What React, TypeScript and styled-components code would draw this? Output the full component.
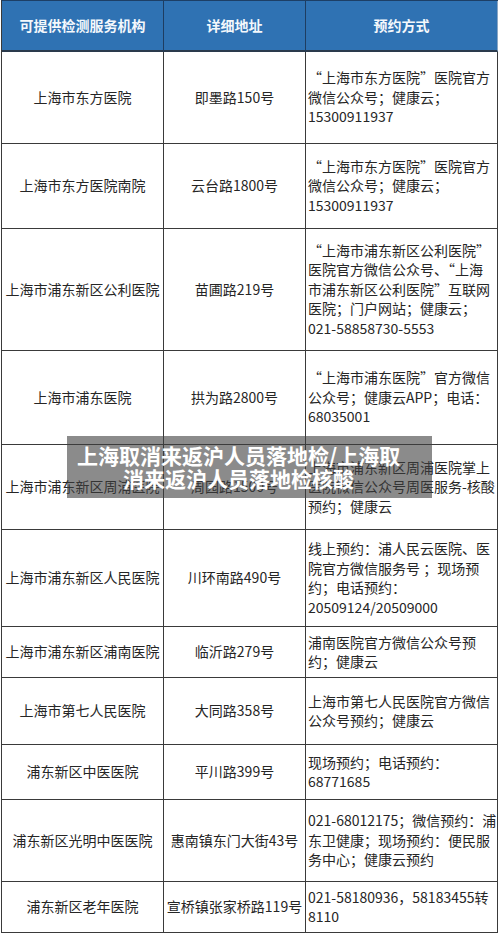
import styled, { createGlobalStyle } from "styled-components";

const GlobalStyle = createGlobalStyle`
    html, body {
        margin: 0;
        padding: 0;
        background: #ffffff;
    }
    body {
        font-family: "Noto Sans CJK SC", "Noto Sans", sans-serif;
        color: #222;
    }
`;

interface IRow {
    name: string;
    address: string;
    booking: string[];
    height: number;
}

const rows: IRow[] = [
    { name: "上海市东方医院", address: "即墨路150号", booking: ["“上海市东方医院”医院官方", "微信公众号；健康云；", "15300911937"], height: 92 },
    { name: "上海市东方医院南院", address: "云台路1800号", booking: ["“上海市东方医院”医院官方", "微信公众号；健康云；", "15300911937"], height: 85 },
    {
        name: "上海市浦东新区公利医院",
        address: "苗圃路219号",
        booking: ["“上海市浦东新区公利医院”", "医院官方微信公众号、“上海", "市浦东新区公利医院”互联网", "医院；门户网站；健康云；", "021-58858730-5553"],
        height: 122,
    },
    { name: "上海市浦东医院", address: "拱为路2800号", booking: ["“上海市浦东医院”官方微信", "公众号；健康云APP；电话：", "68035001"], height: 94 },
    { name: "上海市浦东新区周浦医院", address: "周园路1500号", booking: ["上海市浦东新区周浦医院掌上", "医院微信公众号周医服务-核酸", "预约；健康云"], height: 85 },
    {
        name: "上海市浦东新区人民医院",
        address: "川环南路490号",
        booking: ["线上预约：浦人民云医院、医", "院官方微信服务号 ；现场预", "约；电话预约：", "20509124/20509000"],
        height: 97,
    },
    { name: "上海市浦东新区浦南医院", address: "临沂路279号", booking: ["浦南医院官方微信公众号预", "约；健康云"], height: 51 },
    { name: "上海市第七人民医院", address: "大同路358号", booking: ["上海市第七人民医院官方微信", "公众号预约；健康云"], height: 67 },
    { name: "浦东新区中医医院", address: "平川路399号", booking: ["现场预约；电话预约：", "68771685"], height: 55 },
    {
        name: "浦东新区光明中医医院",
        address: "惠南镇东门大街43号",
        booking: ["021-68012175；微信预约：浦", "东卫健康；现场预约：便民服", "务中心；健康云预约"],
        height: 82,
    },
    { name: "浦东新区老年医院", address: "宣桥镇张家桥路119号", booking: ["021-58180936，58183455转", "8110"], height: 51 },
];

export default function App() {
    return (
        <>
            <GlobalStyle />
            <Page>
                <Table>
                    <HeaderRow>
                        <HeaderCell>可提供检测服务机构</HeaderCell>
                        <HeaderCell>详细地址</HeaderCell>
                        <HeaderCell>预约方式</HeaderCell>
                    </HeaderRow>
                    {rows.map((r) => (
                        <Row key={r.name} $h={r.height}>
                            <Cell>{r.name}</Cell>
                            <Cell>{r.address}</Cell>
                            <Cell $left>
                                <Lines>
                                    {r.booking.map((line, i) => (
                                        <Line key={i}>{line}</Line>
                                    ))}
                                </Lines>
                            </Cell>
                        </Row>
                    ))}
                </Table>
                <Caption>
                    上海取消来返沪人员落地检/上海取
                    <br />
                    消来返沪人员落地检核酸
                </Caption>
            </Page>
        </>
    );
}

const Page = styled.div`
    position: relative;
    width: 500px;
    height: 935px;
    padding-left: 1px;
    box-sizing: border-box;
    overflow: hidden;
`;

const Table = styled.div`
    width: 497px;
    border-left: 1px solid #3a3a3a;
    border-top: 1px solid #1d3f66;
    box-sizing: border-box;
`;

const HeaderRow = styled.div`
    display: grid;
    grid-template-columns: 162px 142px 192px;
    height: 51px;
    background: #2f72b3;
`;

const HeaderCell = styled.div`
    display: flex;
    align-items: center;
    justify-content: center;
    border-right: 1px solid #1e3d61;
    border-bottom: 2px solid #2a3a4c;
    color: #f4f8fc;
    font-size: 14px;
    font-weight: 700;
    padding-bottom: 2px;
    &:nth-child(3) {
        border-right: 1px solid #8aa6c4;
    }
`;

const Row = styled.div<{ $h: number }>`
    display: grid;
    grid-template-columns: 162px 142px 192px;
    height: ${(p) => p.$h}px;
`;

const Cell = styled.div<{ $left?: boolean }>`
    display: flex;
    align-items: center;
    justify-content: ${(p) => (p.$left ? "flex-start" : "center")};
    padding-left: ${(p) => (p.$left ? "2px" : "0")};
    border-right: 1px solid #3a3a3a;
    border-bottom: 1px solid #3a3a3a;
    font-size: 14px;
    line-height: 19.5px;
    color: #262626;
    white-space: nowrap;
    overflow: visible;
`;

const Lines = styled.div`
    display: flex;
    flex-direction: column;
`;

const Line = styled.span`
    display: block;
`;

const Caption = styled.div`
    position: absolute;
    top: 436px;
    left: 67px;
    width: 365px;
    height: 62px;
    box-sizing: border-box;
    padding: 8px 32px 8px 10px;
    background: rgba(62, 62, 62, 0.6);
    color: #ffffff;
    font-size: 21px;
    font-weight: 700;
    line-height: 23px;
    text-align: center;
    white-space: nowrap;
`;
